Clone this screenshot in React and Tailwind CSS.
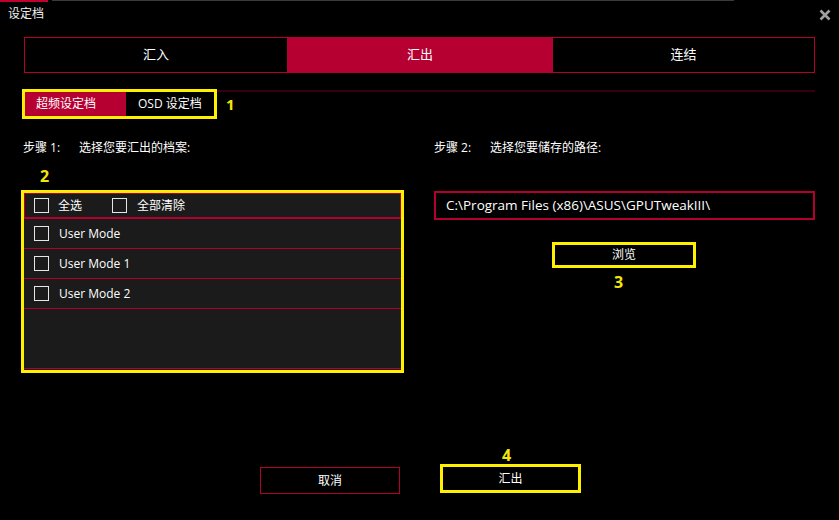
import React, { useState } from 'react';

const RED = 'border-[#b4002f]';

function Box({ checked, onClick }) {
  // 체크박스 (참조 화면은 빈 상자)
  return (
    <span
      onClick={onClick}
      className="w-[15px] h-[15px] border border-[#e6e6e6] shrink-0 flex items-center justify-center text-[11px] leading-none text-white"
    >
      {checked ? '✓' : ''}
    </span>
  );
}

function App() {
  const [tab, setTab] = useState(1);
  const [checked, setChecked] = useState([false, false, false]);
  const modes = ['User Mode', 'User Mode 1', 'User Mode 2'];
  const tabs = ['汇入', '汇出', '连结'];

  const toggle = (i) => setChecked(checked.map((c, j) => (j === i ? !c : c)));

  return (
    <div className="w-[839px] h-[520px] bg-black overflow-hidden text-white font-['Open_Sans','Noto_Sans_CJK_SC',sans-serif]">
      {/* 상단 스트립 */}
      <div className="flex h-[2px]">
        <div className="w-[48px] h-[2px] bg-[#c0002f]" />
        <div className="w-[682px] h-px ml-[4px] bg-[#3a3a3a]" />
      </div>

      {/* 제목 */}
      <div className="h-[35px] flex items-start justify-between pt-[4px] pl-[8px] pr-[8px]">
        <span className="text-[12px] leading-[16px] text-[#f0f0f0]">设定档</span>
        <svg width="12" height="12" viewBox="0 0 12 12" className="mt-[3px]">
          <path d="M1.5 1.5 L10.5 10.5 M10.5 1.5 L1.5 10.5" stroke="#a0a0a0" strokeWidth="2.6" />
        </svg>
      </div>

      {/* 탭 */}
      <div className={`mx-[24px] h-[36px] border ${RED} grid grid-cols-[262px_266px_1fr]`}>
        {tabs.map((t, i) => (
          <button
            key={t}
            onClick={() => setTab(i)}
            className={`text-[13px] ${tab === i ? 'bg-[#b70032]' : 'bg-black'}`}
          >
            {t}
          </button>
        ))}
      </div>

      {/* 하위 탭 */}
      <div className="mx-[24px] mt-[17px] border-t-2 border-[#35000e]">
        <div className="flex items-center -mt-[3px] -ml-[2px]">
          <div className="w-[195px] h-[30px] border-[3px] border-[#fff000] flex text-[12px]">
            <div className="w-[101px] bg-[#b70032] flex items-center pl-[11px]">超频设定档</div>
            <div className="flex items-center pl-[12px]">OSD 设定档</div>
          </div>
          <span className="ml-[9px] text-[15px] font-bold text-[#f5e60a]">1</span>
        </div>
      </div>

      {/* 두 단계 */}
      <div className="flex mt-[21px]">
        <div className="ml-[21px] w-[383px]">
          <div className="flex text-[12px] leading-[16px] pl-[2px]">
            <span className="w-[56px]">步骤 1:</span>
            <span>选择您要汇出的档案:</span>
          </div>
          <div className="mt-[10px] pl-[19px] text-[16px] leading-[20px] font-bold text-[#f5e60a]">2</div>
          <div className="mt-[4px] h-[183px] border-[3px] border-[#fff000] bg-[#1b1b1b] flex flex-col">
            <div className={`h-[26px] border border-b-2 ${RED} flex items-center pl-[9px] text-[12px]`}>
              <Box />
              <span className="ml-[9px]">全选</span>
              <span className="ml-[30px]"><Box /></span>
              <span className="ml-[10px]">全部清除</span>
            </div>
            {modes.map((m, i) => (
              <div key={m} className={`h-[30px] border-b ${RED} flex items-center pl-[10px] text-[12px] font-medium`}>
                <Box checked={checked[i]} onClick={() => toggle(i)} />
                <span className="ml-[10px]">{m}</span>
              </div>
            ))}
            <div className={`flex-1 border-b ${RED} mb-px`} />
          </div>
        </div>

        <div className="ml-[30px] w-[381px]">
          <div className="flex text-[12px] leading-[16px]">
            <span className="w-[56px]">步骤 2:</span>
            <span>选择您要储存的路径:</span>
          </div>
          <div className={`mt-[35px] h-[29px] border-2 ${RED} flex items-center pl-[10px] text-[13.5px]`}>
            C:\Program Files (x86)\ASUS\GPUTweakIII\
          </div>
          <button className="mt-[22px] ml-[118px] w-[144px] h-[26px] border-[3px] border-[#fff000] text-[12px] flex items-center justify-center">
            浏览
          </button>
          <div className="mt-[4px] ml-[180px] text-[16px] leading-[20px] font-bold text-[#f5e60a]">3</div>
        </div>
      </div>

      {/* 하단 버튼 */}
      <div className="mt-[74px] ml-[260px] flex items-start">
        <button className={`mt-[20px] w-[140px] h-[27px] border ${RED} text-[12px] flex items-center justify-center`}>
          取消
        </button>
        <div className="ml-[40px] flex flex-col">
          <span className="pl-[62px] text-[16px] leading-[17px] font-bold text-[#f5e60a]">4</span>
          <button className="w-[141px] h-[29px] border-[3px] border-[#fff000] text-[12px] flex items-center justify-center">
            汇出
          </button>
        </div>
      </div>
    </div>
  );
}

export default App;
